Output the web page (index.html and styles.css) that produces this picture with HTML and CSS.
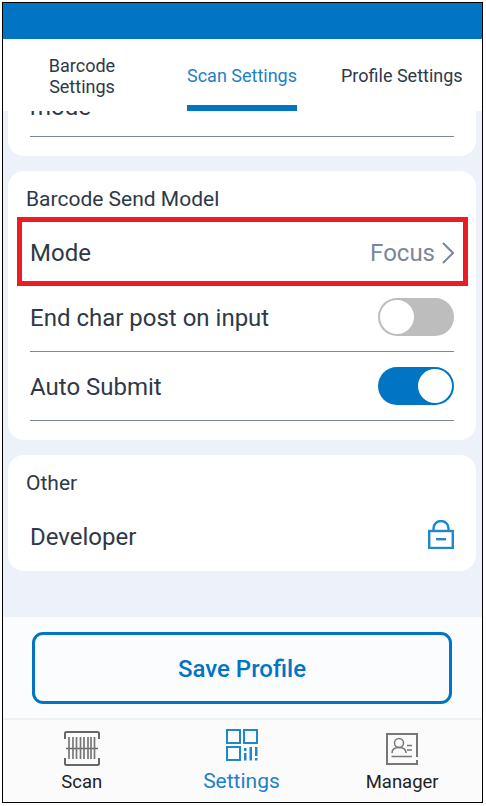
FILE: index.html
```html
<!DOCTYPE html>
<html lang="en">
<head>
	<meta charset="UTF-8">
	<title>Scan Settings</title>
	<link rel="stylesheet" href="styles.css">
</head>
<body>
	<div class="screen">
		<div class="header"></div>
		<div class="tabs">
			<div class="tab tab-first">Barcode Settings</div>
			<div class="tab tab-active">Scan Settings</div>
			<div class="tab tab-last">Profile Settings</div>
		</div>
		<div class="scroll">
			<div class="card card-clipped">
				<div class="row row-clipped"><span>mode</span></div>
			</div>
			<div class="card">
				<div class="card-title">Barcode Send Model</div>
				<div class="row row-mode">
					<span>Mode</span>
					<span class="value">Focus
						<svg class="chevron" width="12" height="22" viewBox="0 0 12 22"><path d="M1 1 L11 11 L1 21" fill="none" stroke="#7b8699" stroke-width="2"/></svg>
					</span>
					<div class="mark"></div>
				</div>
				<div class="row">
					<span class="label">End char post on input</span>
					<div class="switch"><div class="knob"></div></div>
				</div>
				<div class="row">
					<span class="label">Auto Submit</span>
					<div class="switch switch-on"><div class="knob"></div></div>
				</div>
			</div>
			<div class="card card-other">
				<div class="card-title">Other</div>
				<div class="row row-plain">
					<span class="label-up">Developer</span>
					<svg class="lock" width="26" height="29" viewBox="0 0 26 29"><path d="M5.500 11 V8.500 a7.500 7.500 0 0 1 15 0 V11" fill="none" stroke="#1f87cd" stroke-width="2.400"/><rect x="1.200" y="11" width="23.600" height="17" fill="none" stroke="#1f87cd" stroke-width="2.400"/><rect x="8" y="18" width="10" height="2.400" fill="#1f87cd"/></svg>
				</div>
			</div>
		</div>
		<div class="footer">
			<div class="save"><span class="save-text">Save Profile</span></div>
		</div>
		<div class="nav">
			<div class="nav-item nav-first">
				<svg class="nav-scan" width="36" height="35" viewBox="0 0 36 35">
					<path d="M1 8 V2.500 Q1 1 2.500 1 H33.500 Q35 1 35 2.500 V8 M1 27 V32.500 Q1 34 2.500 34 H33.500 Q35 34 35 32.500 V27" fill="none" stroke="#666" stroke-width="2"/>
					<path d="M2 17.500 H34" stroke="#666" stroke-width="1.500"/>
					<path d="M5 6 V28 M9 6 V28 M12.500 6 V28 M16.500 6 V28 M20 6 V28 M24 6 V28 M27 6 V28 M30.500 6 V28" stroke="#777" stroke-width="1.700"/>
				</svg>
				<div class="nav-label">Scan</div>
			</div>
			<div class="nav-item nav-active">
				<svg class="nav-settings" width="32" height="32" viewBox="0 0 32 32">
					<g fill="none" stroke="#1f87cd" stroke-width="2">
						<rect x="1" y="1" width="13" height="13"/>
						<rect x="18" y="1" width="13" height="13"/>
						<rect x="1" y="18" width="13" height="13"/>
					</g>
					<path d="M18 19 h2.500 v3 h-2.500 z M18 24 h2.500 v7.500 h-2.500 z M23.500 18 h2.500 v13.500 h-2.500 z M29 18 h2.500 v9 h-2.500 z M29 29 h2.500 v2.500 h-2.500 z" fill="#1f87cd"/>
				</svg>
				<div class="nav-label">Settings</div>
			</div>
			<div class="nav-item nav-last">
				<svg class="nav-manager" width="32" height="32" viewBox="0 0 32 32">
					<path d="M31 24 V1 H1 V31 H31 V27" fill="none" stroke="#777" stroke-width="2"/>
					<circle cx="13" cy="10" r="4.500" fill="none" stroke="#777" stroke-width="1.500"/>
					<path d="M6 20 C6 16 9 14.500 13 14.500 C17 14.500 20 16 20 20" fill="none" stroke="#777" stroke-width="1.500"/>
					<path d="M5.500 23.500 H26 M21 12.500 H26 M21 17 H26" stroke="#777" stroke-width="1.500"/>
				</svg>
				<div class="nav-label">Manager</div>
			</div>
		</div>
	</div>
</body>
</html>
```

FILE: styles.css
```css
*{
	margin: 0;
	padding: 0;
	box-sizing: border-box;
}
body{
	padding: 2px;
	background-color: #fff;
	font-family: Roboto, "Liberation Sans", sans-serif;
	color: #2f3848;
}
.screen{
	width: 481px;
	height: 801px;
	border: 1px solid #000;
	display: flex;
	flex-direction: column;
}
.header{
	height: 36px;
	background-color: #0274c4;
}
.tabs{
	height: 72px;
	background-color: #fff;
	display: flex;
	padding-left: 24px;
	font-size: 18px;
	line-height: 21px;
}
.tab{
	height: 72px;
	padding-top: 7px;
	border-bottom: 6px solid transparent;
	display: flex;
	align-items: center;
	text-align: center;
	white-space: nowrap;
}
.tab-first{
	width: 110px;
	white-space: normal;
	justify-content: center;
	padding-left: 20px;
	padding-right: 20px;
	margin-right: 50px;
}
.tab-active{
	width: 110px;
	justify-content: center;
	color: #1f80c8;
	border-bottom-color: #0274c4;
	margin-right: 44px;
}
.scroll{
	height: 506px;
	background-color: #edf2fa;
	overflow: hidden;
	padding: 0 6px 0 5px;
}
.card{
	background-color: #fff;
	border-radius: 16px;
	margin-bottom: 15px;
	padding: 14px 22px 19px;
}
.card-clipped{
	margin-top: -43px;
	padding-top: 0;
}
.card-other{
	padding-bottom: 0;
}
.card-title{
	font-size: 21px;
	line-height: 28px;
	margin-left: -4px;
}
.row{
	height: 69px;
	border-bottom: 1px solid #7d8799;
	display: flex;
	align-items: center;
	justify-content: space-between;
	font-size: 24px;
	position: relative;
}
.label{
	padding-top: 2px;
}
.label-up{
	margin-bottom: 2px;
}
.row-clipped{
	padding-top: 10px;
}
.row-mode{
	height: 70px;
	padding-top: 10px;
}
.row-plain{
	height: 74px;
	padding-top: 8px;
	border-bottom: none;
}
.lock{
	margin-bottom: 8px;
}
.value{
	color: #7b8699;
	display: flex;
	align-items: center;
	gap: 7px;
}
.mark{
	position: absolute;
	left: -13px;
	right: -14px;
	top: 4px;
	bottom: -4px;
	border: 5px solid #ed1c24;
}
.switch{
	width: 76px;
	height: 38px;
	border-radius: 19px;
	background-color: #bdbdbd;
	padding: 2px;
	display: flex;
}
.switch-on{
	background-color: #0274c4;
	justify-content: flex-end;
}
.knob{
	width: 34px;
	height: 34px;
	border-radius: 50%;
	background-color: #fff;
}
.footer{
	height: 101px;
	background-color: #fbfcfe;
	padding: 15px 30px 0 29px;
}
.save{
	height: 72px;
	border: 3px solid #0274c4;
	border-radius: 11px;
	display: flex;
	align-items: center;
	justify-content: center;
	font-size: 24px;
	font-weight: 500;
	color: #0274c4;
}
.save-text{
	padding-top: 2px;
}
.nav{
	height: 84px;
	background-color: #fbfbfb;
	border-top: 2px solid #f0f0f0;
	display: grid;
	grid-template-columns: 1fr 1fr 1fr;
	font-size: 18.5px;
	color: #222;
}
.nav-item{
	display: flex;
	flex-direction: column;
	align-items: center;
}
.nav-first{
	padding-right: 2px;
}
.nav-scan{
	margin-top: 11px;
}
.nav-settings{
	margin-top: 9px;
}
.nav-manager{
	margin-top: 13px;
}
.nav-label{
	line-height: 22px;
	margin-top: 5px;
}
.nav-last .nav-label{
	margin-top: 6px;
}
.nav-active{
	color: #1f80c8;
	font-size: 21px;
}
.nav-active .nav-label{
	margin-top: 9px;
	margin-right: 2px;
}
```
